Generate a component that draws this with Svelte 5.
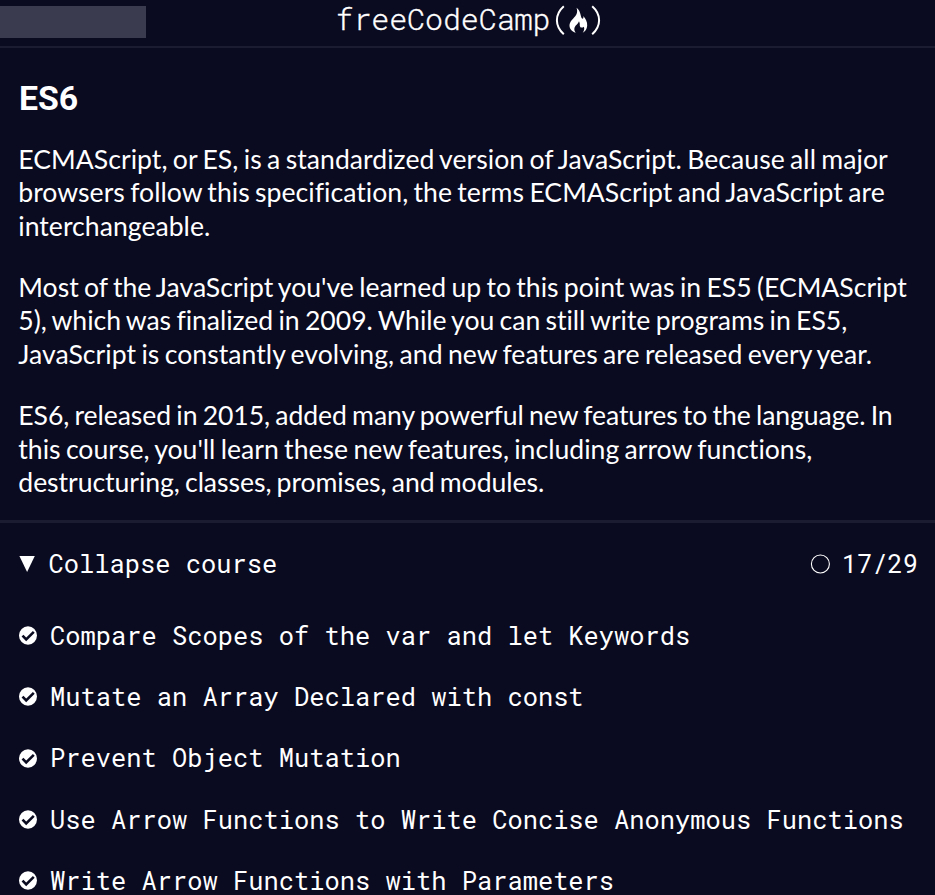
<script>
  // Each line carries its own fine tracking, in pixels.
  const intro = [
    [
      ['ECMAScript, or ES, is a standardized version of JavaScript. Because all major', 0.035],
      ['browsers follow this specification, the terms ECMAScript and JavaScript are', 0.022],
      ['interchangeable.', 0.02]
    ],
    [
      ["Most of the JavaScript you've learned up to this point was in ES5 (ECMAScript", -0.005],
      ['5), which was finalized in 2009. While you can still write programs in ES5,', -0.03],
      ['JavaScript is constantly evolving, and new features are released every year.', 0.035]
    ],
    [
      ['ES6, released in 2015, added many powerful new features to the language. In', -0.07],
      ["this course, you'll learn these new features, including arrow functions,", 0.005],
      ['destructuring, classes, promises, and modules.', -0.06]
    ]
  ];
  const lessons = [
    'Compare Scopes of the var and let Keywords',
    'Mutate an Array Declared with const',
    'Prevent Object Mutation',
    'Use Arrow Functions to Write Concise Anonymous Functions',
    'Write Arrow Functions with Parameters'
  ];
</script>

<div class="page">
  <header>
    <div class="search"></div>
    <div class="logo">
      <span>freeCodeCamp</span>
      <svg width="48" height="36" viewBox="0 0 48 36" fill="none">
        <path d="M9.800 4.300C.6 12.500.6 24 9.800 32.300M38.200 4.300C47.400 12.500 47.400 24 38.200 32.300" stroke="#fff" stroke-width="2" />
        <path fill="#fff" d="M22.500 5.700c3.300 2.300 3.800 5.800 4.700 9.400.7 2.700 3.100 1.900 1.900-1.100 2.600 2.500 4.400 6 4.100 9.700-.3 3.200-1.800 5.500-4.500 7 1.500-2.200 1.900-4.200 1.200-6-1 1.200-3.300 1.300-3.900-.3-.6-1.400.4-2.800-1-5.200-.7 2.500-3.500 3.800-4.400 6.200-.7 2-.1 3.700 1.100 5.400-3.900-1.300-6.500-3.900-6.200-7.700.4-5.200 6.100-7.400 7.400-12.200.5-1.800.2-3.500-.4-5.200Z" />
      </svg>
    </div>
  </header>
  <section class="intro">
    <h1>ES6</h1>
    {#each intro as lines}
      <p>{#each lines as [line, tracking]}<span style="letter-spacing: {tracking}px">{line}</span>{/each}</p>
    {/each}
  </section>
  <section class="course">
    <div class="toggle">
      <svg class="arrow" width="16" height="16" viewBox="0 0 16 16"><path d="M.4 0h15.400L8.100 16Z" fill="#fff" /></svg>
      <span>Collapse course</span>
      <svg class="ring" width="20" height="20" viewBox="0 0 20 20"><circle cx="10.400" cy="10" r="9" fill="none" stroke="#fff" stroke-width="1.1" /></svg>
      <span>17/29</span>
    </div>
    <ul>
      {#each lessons as lesson}
        <li>
          <svg width="18" height="19" viewBox="0 0 18 19">
            <ellipse cx="9" cy="9.500" rx="9" ry="9.300" fill="#fff" />
            <path d="m3.500 9.600 3.700 3.800 7.600-7.500" fill="none" stroke="#0a0a20" stroke-width="2.600" />
          </svg>
          <span>{lesson}</span>
        </li>
      {/each}
    </ul>
  </section>
</div>

<style>
  :global(body) { background: #0a0a20; overflow: hidden; }
  .page { height: 895px; overflow: hidden; background: #0a0a20; color: #fff; font-family: Lato, sans-serif; }
  header { box-sizing: border-box; height: 48px; border-bottom: 2px solid #1b1b32; display: grid; grid-template-columns: 335.500px auto; align-items: start; }
  .search { width: 146px; height: 32px; margin-top: 6px; background: #3b3b4f; }
  .logo { display: flex; align-items: flex-start; height: 40px; padding-top: 2px; font: 300 30px/34px "Roboto Mono", "Liberation Mono", monospace; letter-spacing: -.1px; -webkit-text-stroke: .35px #fff; }
  .logo svg { margin: 0 0 0 4px; }
  .intro { box-sizing: border-box; height: 475px; padding: 31px 18.300px 0; border-bottom: 3px solid #1b1b32; }
  h1 { margin: 0 0 23.500px .7px; font: 700 33.800px/40px Roboto, sans-serif; }
  p { margin: 0 0 26.900px; font-size: 26.600px; line-height: 33.750px; word-spacing: -1.500px; font-variant-ligatures: none; white-space: nowrap; }
  p span { display: block; }
  .course { font: 25.410px/34px "Roboto Mono", "Liberation Mono", monospace; white-space: nowrap; }
  .toggle { display: flex; align-items: center; height: 34px; padding: 24px 17px 0 19px; }
  .toggle span { padding-bottom: 2px; }
  .arrow { margin-right: 13.500px; }
  .ring { margin: 0 12px 0 auto; }
  ul { list-style: none; margin: 0; padding: 23.400px 0 0 19px; }
  li { display: flex; align-items: center; gap: 13px; height: 61.200px; }
  li svg { margin-top: 1.500px; }
</style>
